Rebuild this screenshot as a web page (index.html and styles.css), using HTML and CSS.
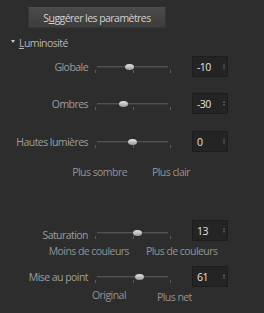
FILE: index.html
```html
<!DOCTYPE html>
<html lang="fr">

<head>
    <meta charset="UTF-8">
    <meta name="viewport" content="width=device-width, initial-scale=1.0">
    <title>Ajuster l'exposition</title>
    <link rel="stylesheet" href="styles.css">
</head>

<body>
    <div class="panel">
        <button class="suggest">S<u>u</u>ggérer les paramètres</button>

        <div class="section">
            <span class="caret"></span>
            <span class="section-title"><u>L</u>uminosité</span>
        </div>

        <div class="row row-globale">
            <span class="label">Globale</span>
            <div class="slider">
                <div class="ticks"><i></i><i></i><i></i></div>
                <span class="thumb" style="left: 37px"></span>
            </div>
            <div class="spin"><span>-10</span><span class="arrows"></span></div>
        </div>

        <div class="row row-ombres">
            <span class="label">Ombres</span>
            <div class="slider">
                <div class="ticks"><i></i><i></i><i></i></div>
                <span class="thumb" style="left: 31px"></span>
            </div>
            <div class="spin"><span>-30</span><span class="arrows"></span></div>
        </div>

        <div class="row row-hautes">
            <span class="label">Hautes lumières</span>
            <div class="slider">
                <div class="ticks"><i></i><i></i><i></i></div>
                <span class="thumb" style="left: 40px"></span>
            </div>
            <div class="spin"><span>0</span><span class="arrows"></span></div>
        </div>

        <div class="hints hints-light">
            <span class="hint-left">Plus sombre</span>
            <span class="hint-right">Plus clair</span>
        </div>

        <div class="row row-saturation">
            <span class="label">Saturation</span>
            <div class="slider">
                <div class="ticks"><i></i><i></i><i></i></div>
                <span class="thumb" style="left: 45px"></span>
            </div>
            <div class="spin"><span>13</span><span class="arrows"></span></div>
        </div>

        <div class="hints hints-color">
            <span class="hint-left">Moins de couleurs</span>
            <span class="hint-right">Plus de couleurs</span>
        </div>

        <div class="row row-focus">
            <span class="label">Mise au point</span>
            <div class="slider">
                <div class="ticks"><i></i><i></i><i></i></div>
                <span class="thumb" style="left: 47px"></span>
            </div>
            <div class="spin"><span>61</span><span class="arrows"></span></div>
        </div>

        <div class="hints hints-focus">
            <span class="hint-left">Original</span>
            <span class="hint-right">Plus net</span>
        </div>
    </div>
</body>

</html>
```

FILE: styles.css
```css
body {
    margin: 0;
    background: #2d2d2d;
    font-family: "Open Sans", "Noto Sans", sans-serif;
    font-size: 10.5px;
    letter-spacing: -0.55px;
}

.panel {
    padding-top: 7px;
}

.suggest {
    display: block;
    margin-left: 28px;
    width: 138px;
    height: 21px;
    padding: 0;
    border: 1px solid #363636;
    border-top-color: #4c4c4c;
    border-radius: 1px;
    background: linear-gradient(#4a4a4a, #3d3d3d);
    color: #d2d2d2;
    font-family: inherit;
    font-size: 10.5px;
    letter-spacing: -0.55px;
}

/* section header */
.section {
    display: flex;
    align-items: center;
    height: 15px;
    margin-top: 7px;
}

.caret {
    width: 0;
    height: 0;
    margin-left: 11px;
    margin-right: 4px;
    margin-top: -3px;
    border-left: 2.5px solid transparent;
    border-right: 2.5px solid transparent;
    border-top: 3px solid #c8c8c8;
}

.section-title {
    color: #b4b4b4;
}

/* slider rows */
.row {
    display: flex;
    height: 21px;
}

.row-globale {
    margin-top: 6px;
}

.row-ombres {
    margin-top: 16px;
}

.row-hautes {
    margin-top: 17px;
}

.row-saturation {
    margin-top: 41px;
}

.row-focus {
    margin-top: 8px;
}

.label {
    width: 88px;
    flex: none;
    text-align: right;
    line-height: 21px;
    padding-top: 1px;
    color: #9e9e9e;
}

.slider {
    position: relative;
    width: 82px;
    height: 21px;
    flex: none;
    margin-left: 4px;
}

.slider::before {
    content: "";
    position: absolute;
    left: 5px;
    right: 6px;
    top: 10px;
    height: 1px;
    background: #525252;
    box-shadow: 0 1px 0 #3a3a3a;
}

.ticks {
    position: absolute;
    left: 3px;
    width: 76px;
    top: 14px;
    height: 3px;
    display: flex;
    justify-content: space-between;
}

.ticks i {
    width: 1px;
    background: #5c5c5c;
}

.thumb {
    position: absolute;
    top: 8px;
    width: 9px;
    height: 6px;
    margin-left: -4px;
    border-radius: 50%;
    background: linear-gradient(#e6e6e6, #9a9a9a);
}

.row-saturation .label {
    padding-top: 5px;
}

.row-saturation .slider {
    margin-top: 2px;
}

.spin {
    box-sizing: border-box;
    display: flex;
    justify-content: space-between;
    align-items: center;
    width: 36px;
    height: 21px;
    margin-left: 18px;
    padding: 0 2px 0 4px;
    border: 1px solid #1d1d1d;
    background: #242424;
    color: #e2e2e2;
}

.arrows {
    display: flex;
    flex-direction: column;
    gap: 1px;
}

.arrows::before,
.arrows::after {
    content: "";
    width: 0;
    height: 0;
    border-left: 1.5px solid transparent;
    border-right: 1.5px solid transparent;
}

.arrows::before {
    border-bottom: 2px solid #6e6e6e;
}

.arrows::after {
    border-top: 2px solid #6e6e6e;
}

/* captions under the sliders */
.hints {
    display: flex;
    height: 14px;
    line-height: 14px;
    color: #939393;
}

.hints-light {
    margin-top: 13px;
}

.hints-light .hint-left {
    width: 127px;
}

.hints-light .hint-right {
    margin-left: 25px;
}

.hints-color {
    margin-top: 3px;
}

.hints-color .hint-left {
    width: 129px;
}

.hints-color .hint-right {
    margin-left: 17px;
}

.hints-focus {
    margin-top: 1px;
}

.hints-focus .hint-left {
    width: 126px;
}

.hints-focus .hint-right {
    margin-left: 31px;
    margin-top: 2px;
}

.hint-left {
    text-align: right;
}
```
